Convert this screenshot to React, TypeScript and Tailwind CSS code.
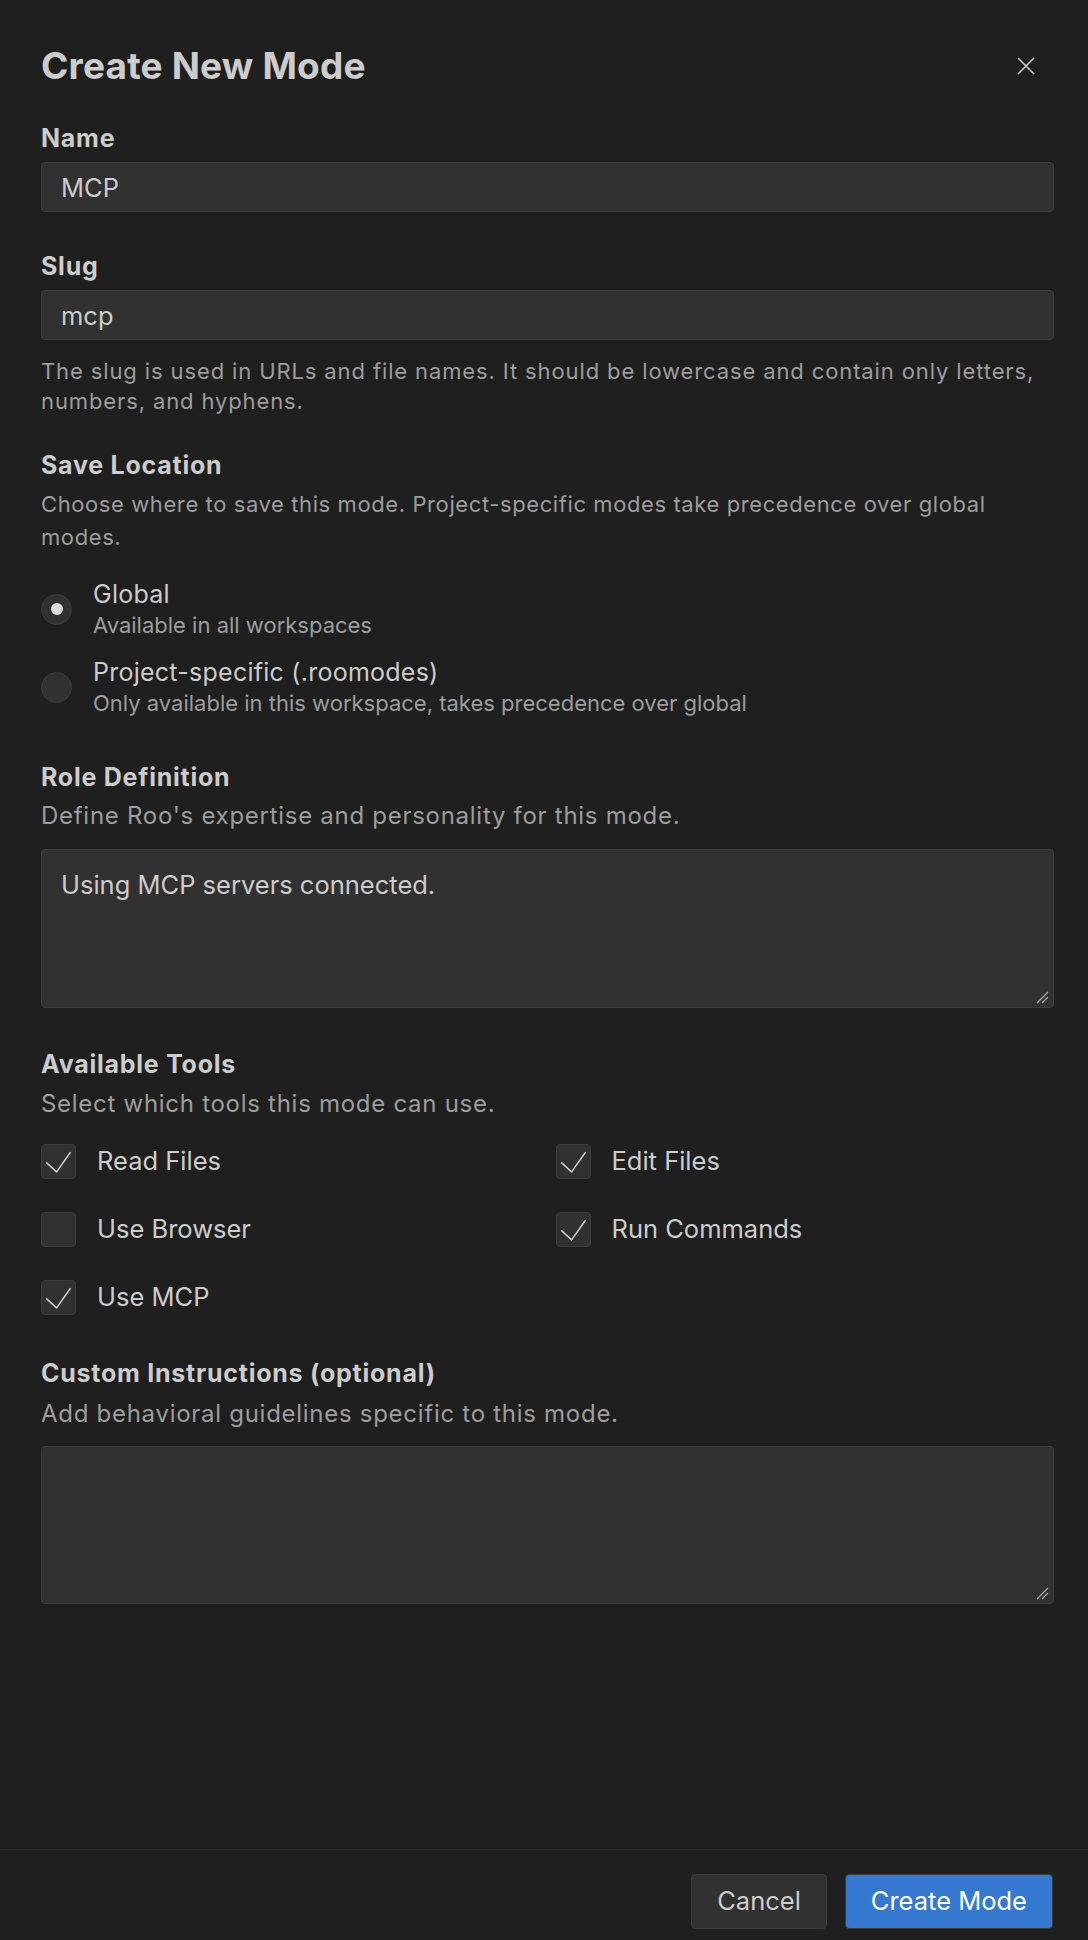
import React from "react";

function Label({ children, className = "" }: { children: React.ReactNode; className?: string }) {
  return (
    <p className={`text-[25px] leading-[32px] font-bold tracking-[0.03em] text-[#cccccc] ${className}`}>{children}</p>
  );
}

function Desc({ children, className = "" }: { children: React.ReactNode; className?: string }) {
  return <p className={`text-[#9d9d9d] ${className}`}>{children}</p>;
}

function ResizeGrip() {
  return (
    <svg className="absolute right-[5px] bottom-[4px]" width="14" height="14" viewBox="0 0 14 14" fill="none">
      <path d="M2 13 L13 2 M7 13 L13 7" stroke="#a8a8a8" strokeWidth="1.3" />
    </svg>
  );
}

function TextBox({ value, height }: { value: string; height: string }) {
  return (
    <div className={`relative ${height}`}>
      <textarea
        readOnly
        value={value}
        className="w-full h-full resize-none bg-[#313131] border border-[#3c3c3c] rounded-[4px] px-[19px] pt-[15px] text-[25.5px] leading-[39px] text-[#cccccc] outline-none"
      />
      <ResizeGrip />
    </div>
  );
}

function Radio({ checked, label, sub }: { checked: boolean; label: string; sub: string }) {
  return (
    <div className="flex items-center gap-[21px]">
      <div className="w-[31px] h-[31px] rounded-full bg-[#313131] border border-[#3c3c3c] flex items-center justify-center shrink-0">
        {checked && <div className="w-[12px] h-[12px] rounded-full bg-[#dddddd]" />}
      </div>
      <div>
        <p className="text-[25px] leading-[32px] tracking-[0.01em] text-[#cccccc]">{label}</p>
        <p className="text-[22px] leading-[30px] text-[#9d9d9d]">{sub}</p>
      </div>
    </div>
  );
}

function Check({ checked, label }: { checked: boolean; label: string }) {
  return (
    <div className="flex items-center gap-[21px] h-[35px]">
      <div className="w-[35px] h-[35px] rounded-[4px] bg-[#313131] border border-[#3c3c3c] shrink-0 flex items-center justify-center">
        {checked && (
          <svg width="35" height="35" viewBox="0 0 35 35" fill="none">
            <path d="M5 19 L15.5 28.5 L30 8" stroke="#cccccc" strokeWidth="1.6" strokeLinecap="round" strokeLinejoin="round" />
          </svg>
        )}
      </div>
      <span className="text-[25.5px] text-[#cccccc]">{label}</span>
    </div>
  );
}

export default function App() {
  return (
    <div className="min-h-[1940px] flex flex-col bg-[#1f1f1f] font-[Inter,sans-serif]">
      <div className="flex-1 pt-[44px] pl-[41px] pr-[34px]">
        {/* header */}
        <div className="flex items-center justify-between h-[44px]">
          <h1 className="text-[37px] leading-[44px] font-bold tracking-[0.005em] text-[#cccccc]">Create New Mode</h1>
          <svg className="mr-[19px]" width="18" height="18" viewBox="0 0 18 18" fill="none">
            <path d="M1 1 L17 17 M17 1 L1 17" stroke="#cccccc" strokeWidth="1.6" />
          </svg>
        </div>

        {/* Name */}
        <Label className="mt-[34px]">Name</Label>
        <input
          readOnly
          value="MCP"
          className="mt-[8px] w-full h-[50px] bg-[#313131] border border-[#3c3c3c] rounded-[4px] px-[19px] text-[25.5px] text-[#cccccc] outline-none"
        />

        {/* Slug */}
        <Label className="mt-[38px]">Slug</Label>
        <input
          readOnly
          value="mcp"
          className="mt-[8px] w-full h-[50px] bg-[#313131] border border-[#3c3c3c] rounded-[4px] px-[19px] text-[25.5px] text-[#cccccc] outline-none"
        />
        <Desc className="mt-[16px] text-[22px] leading-[30px] tracking-[0.04em]">
          The slug is used in URLs and file names. It should be lowercase and contain only letters, numbers, and hyphens.
        </Desc>

        {/* Save location */}
        <Label className="mt-[33px]">Save Location</Label>
        <Desc className="mt-[7px] text-[22px] leading-[33px] tracking-[0.027em]">
          Choose where to save this mode. Project-specific modes take precedence over global modes.
        </Desc>
        <div className="mt-[24px] flex flex-col gap-[16px]">
          <Radio checked label="Global" sub="Available in all workspaces" />
          <Radio checked={false} label="Project-specific (.roomodes)" sub="Only available in this workspace, takes precedence over global" />
        </div>

        {/* Role definition */}
        <Label className="mt-[43px]">Role Definition</Label>
        <Desc className="mt-[8px] text-[24px] leading-[30px] tracking-[0.03em]">
          Define Roo's expertise and personality for this mode.
        </Desc>
        <div className="mt-[18px]">
          <TextBox value="Using MCP servers connected." height="h-[159px]" />
        </div>

        {/* Tools */}
        <Label className="mt-[40px]">Available Tools</Label>
        <Desc className="mt-[9px] text-[24px] leading-[30px] tracking-[0.03em]">Select which tools this mode can use.</Desc>
        <div className="mt-[25px] grid grid-cols-2 gap-x-[16px] gap-y-[33px]">
          <Check checked label="Read Files" />
          <Check checked label="Edit Files" />
          <Check checked={false} label="Use Browser" />
          <Check checked label="Run Commands" />
          <Check checked label="Use MCP" />
        </div>

        {/* Custom instructions */}
        <Label className="mt-[42px]">Custom Instructions (optional)</Label>
        <Desc className="mt-[10px] text-[24px] leading-[30px] tracking-[0.03em]">
          Add behavioral guidelines specific to this mode.
        </Desc>
        <div className="mt-[17px]">
          <TextBox value="" height="h-[158px]" />
        </div>
      </div>

      {/* footer */}
      <div className="border-t border-[#2b2b2b] pt-[24px] pb-[11px] pl-[41px] pr-[35px] flex justify-end gap-[18px]">
        <button className="h-[55px] px-[25px] rounded-[4px] bg-[#313131] border border-[#3c3c3c] text-[25.5px] text-[#cccccc]">
          Cancel
        </button>
        <button className="h-[55px] px-[25px] rounded-[4px] bg-[#3478cf] border border-[#3a3a3a] text-[25.5px] text-white">
          Create Mode
        </button>
      </div>
    </div>
  );
}
